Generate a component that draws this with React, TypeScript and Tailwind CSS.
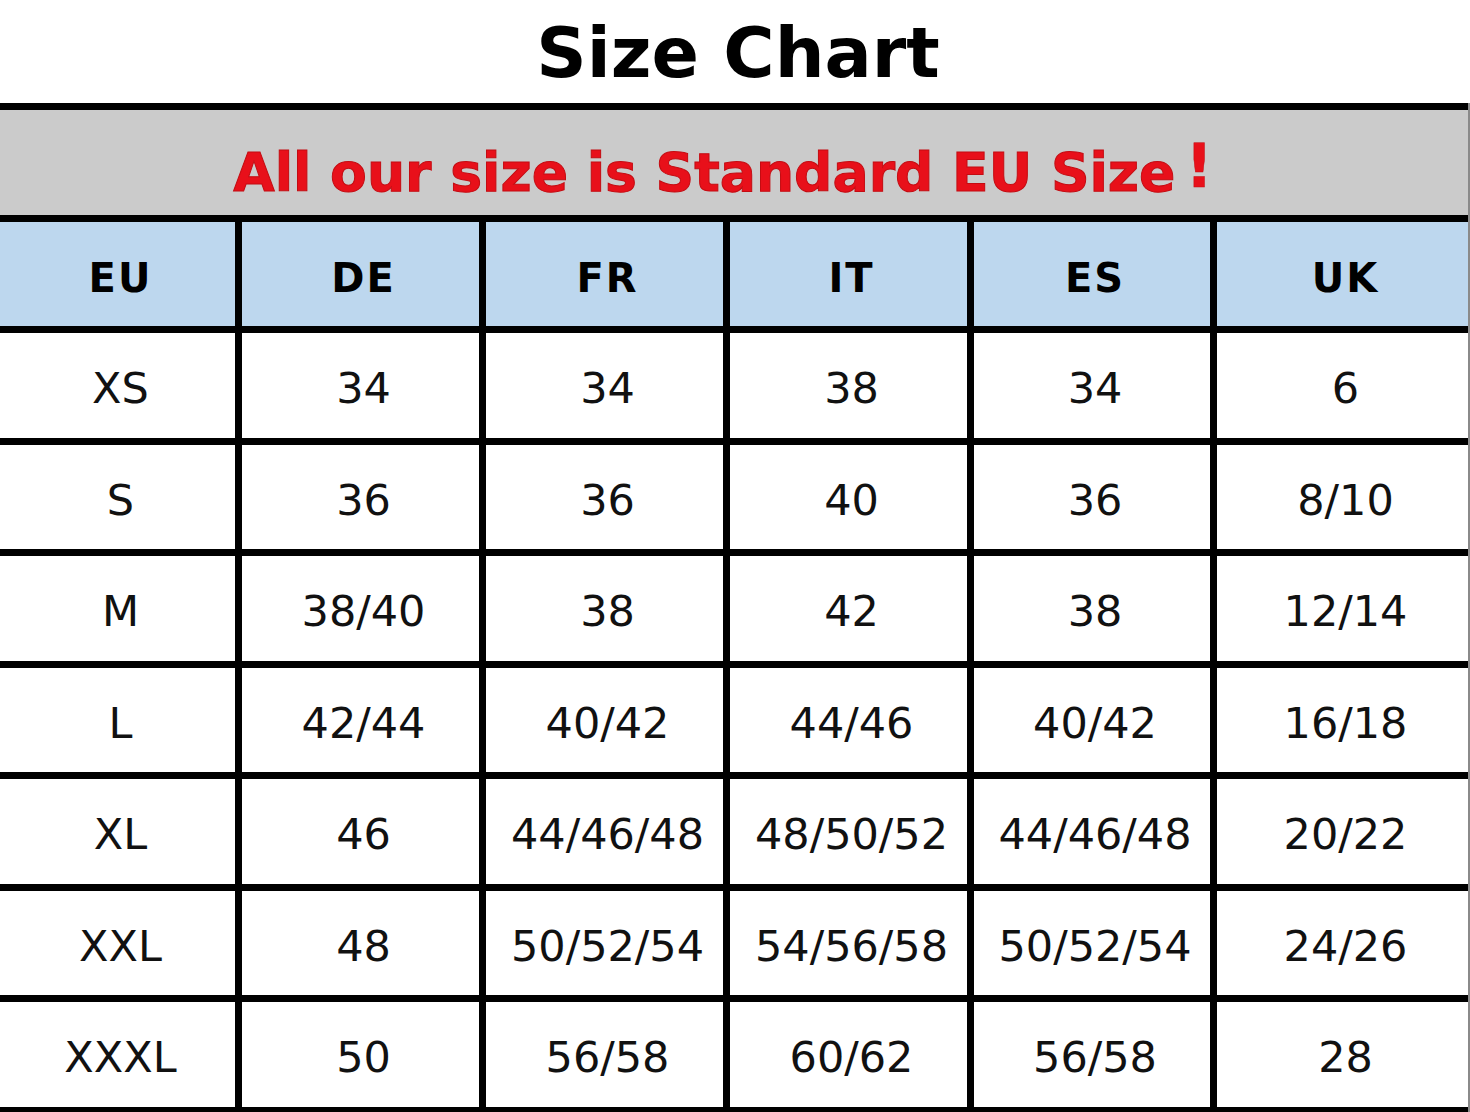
import React from "react";

const headers = ["EU", "DE", "FR", "IT", "ES", "UK"];
const rows: string[][] = [
  ["XS", "34", "34", "38", "34", "6"],
  ["S", "36", "36", "40", "36", "8/10"],
  ["M", "38/40", "38", "42", "38", "12/14"],
  ["L", "42/44", "40/42", "44/46", "40/42", "16/18"],
  ["XL", "46", "44/46/48", "48/50/52", "44/46/48", "20/22"],
  ["XXL", "48", "50/52/54", "54/56/58", "50/52/54", "24/26"],
  ["XXXL", "50", "56/58", "60/62", "56/58", "28"],
];

export default function App() {
  return (
    <div className="w-[1470px] h-[1112px] overflow-hidden bg-white">
      <div className="h-[103px] flex items-center justify-center">
        <h1 className="font-['DejaVu_Sans',sans-serif] font-bold text-[70px] leading-none text-black pt-[2px] pl-[6px]">
          Size Chart
        </h1>
      </div>
      <div className="flex flex-col gap-[7px] bg-black pt-[7px] pb-[7px] border-r-2 border-[#8a8a8a]">
        <div className="h-[105px] bg-[#cbcbcb] flex items-center justify-center pt-[20px] pr-[22px]">
          <span className="font-['DejaVu_Sans',sans-serif] font-bold text-[53.6px] leading-none text-[#e8101a] [-webkit-text-stroke:1px_#c40c12]">
            All our size is Standard EU Size
          </span>
          <span className="ml-[10px] font-['DejaVu_Sans',sans-serif] font-bold text-[60px] leading-none text-[#e8101a] -mt-[14px] [-webkit-text-stroke:0.5px_#c40c12]">
            !
          </span>
        </div>
        <div className="grid grid-cols-[235px_237px_237px_237px_236px_1fr] gap-x-[7px] h-[104px]">
          {headers.map((h) => (
            <div
              key={h}
              className="bg-[#bdd7ee] flex items-center justify-center pt-[8px] pl-[6px] font-['DejaVu_Sans',sans-serif] font-bold text-[40px] tracking-[2px] text-black"
            >
              {h}
            </div>
          ))}
        </div>
        {rows.map((r, i) => (
          <div
            key={i}
            className="grid grid-cols-[235px_237px_237px_237px_236px_1fr] gap-x-[7px] h-[104.57px]"
          >
            {r.map((c, j) => (
              <div
                key={j}
                className="bg-white flex items-center justify-center pt-[6px] pl-[6px] font-['DejaVu_Sans',sans-serif] text-[43px] text-[#111]"
              >
                {c}
              </div>
            ))}
          </div>
        ))}
      </div>
    </div>
  );
}
